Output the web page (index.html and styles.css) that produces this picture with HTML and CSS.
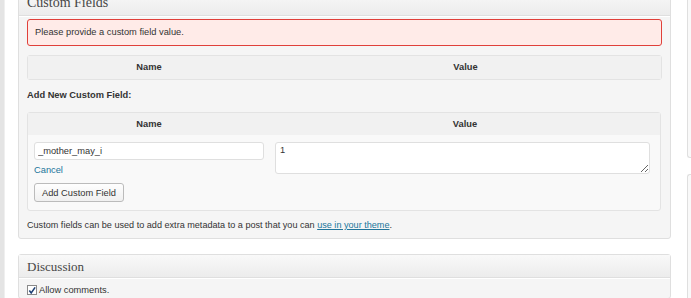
FILE: index.html
```html
<!DOCTYPE html>
<html lang="en">
<head>
  <meta charset="UTF-8" />
  <title>Custom Fields</title>
  <link rel="stylesheet" href="styles.css">
</head>
<body>
  <div class="edge"></div>

  <div class="content">
    <!-- Custom Fields meta box -->
    <div class="postbox first">
      <h3 class="box-title">Custom Fields</h3>
      <div class="inside">
        <div class="notice-error">Please provide a custom field value.</div>

        <div class="meta-table head-only">
          <div class="meta-head">
            <span class="col-name">Name</span>
            <span class="col-value">Value</span>
          </div>
        </div>

        <p class="add-label">Add New Custom Field:</p>

        <div class="meta-table">
          <div class="meta-head">
            <span class="col-name">Name</span>
            <span class="col-value">Value</span>
          </div>
          <div class="meta-body">
            <div class="col-name left">
              <input type="text" class="key-input" value="_mother_may_i">
              <a href="#" class="cancel">Cancel</a>
              <button class="button">Add Custom Field</button>
            </div>
            <div class="col-value">
              <textarea class="value-input">1</textarea>
            </div>
          </div>
        </div>

        <p class="desc">Custom fields can be used to add extra metadata to a post that you can <a href="#">use in your theme</a>.</p>
      </div>
    </div>

    <!-- Discussion meta box -->
    <div class="postbox">
      <h3 class="box-title small">Discussion</h3>
      <div class="inside">
        <label class="check">
          <span class="checkbox">
            <svg width="9" height="9" viewBox="0 0 9 9"><path d="M1.5 4.5 L3.6 7.2 L8 1" fill="none" stroke="#1d3f73" stroke-width="1.8"/></svg>
          </span>
          Allow comments.
        </label>
      </div>
    </div>
  </div>

  <div class="side">
    <div class="side-box tall"></div>
    <div class="side-box"></div>
  </div>
</body>
</html>
```

FILE: styles.css
```css
body {
  margin: 0;
  display: flex;
  height: 298px;
  overflow: hidden;
  background: #fff;
  font-family: "Liberation Sans", Arial, sans-serif;
  font-size: 9.3px;
  color: #333;
}

/* левая серая полоска */
.edge {
  width: 4px;
  flex-shrink: 0;
  background: #e4e4e4;
  border-right: 1px solid #efefef;
}

.content {
  flex: 1;
  margin: 0 16px 0 13px;
  min-width: 0;
}

/* Мета-бокс */
.postbox {
  border: 1px solid #dfdfdf;
  border-radius: 3px;
  background: #f5f5f5;
  margin-bottom: 15px;
}
.postbox.first {
  margin-top: -10px;
}

.box-title {
  margin: 0;
  height: 24px;
  line-height: 23px;
  padding: 0 8px;
  border-bottom: 1px solid #dfdfdf;
  background: linear-gradient(#f9f9f9, #ececec);
  font-family: "Liberation Serif", Georgia, serif;
  font-weight: normal;
  font-size: 14px;
  color: #464646;
  box-shadow: 0 1px 0 #fff;
}
.box-title.small {
  height: 22px;
  line-height: 23px;
  font-size: 13px;
}

.inside {
  padding: 3px 8px 0;
}

.notice-error {
  border: 1px solid #e0403a;
  border-radius: 3px;
  background: #ffebe8;
  height: 25px;
  line-height: 25px;
  padding: 0 7px;
  margin-bottom: 9px;
}

/* Таблицы полей */
.meta-table {
  border: 1px solid #e3e3e3;
  border-radius: 3px;
  background: #f9f9f9;
  margin-right: 1px;
}
.meta-table.head-only {
  margin-right: 0;
}
.meta-head {
  display: flex;
  height: 22px;
  line-height: 22px;
  background: #f1f1f1;
  font-weight: bold;
  text-align: center;
}
.head-only .meta-head {
  height: 23px;
  line-height: 23px;
}
.col-name {
  width: 242px;
  flex-shrink: 0;
}
.col-value {
  flex: 1;
}

.meta-body {
  display: flex;
  padding: 7px 0 8px;
}
.meta-body .left {
  display: flex;
  flex-direction: column;
  align-items: flex-start;
  padding-left: 6px;
  width: 241px;
}
.meta-body .col-value {
  padding: 0 10px 0 0;
}

.key-input {
  box-sizing: border-box;
  width: 230px;
  height: 18px;
  margin: 0;
  padding: 0 3px;
  border: 1px solid #dfdfdf;
  border-radius: 3px;
  background: #fff;
  font: inherit;
  color: #333;
  outline: none;
}
.value-input {
  box-sizing: border-box;
  display: block;
  width: 100%;
  height: 32px;
  margin: 0;
  padding: 2px 4px;
  border: 1px solid #dfdfdf;
  border-radius: 3px;
  background: #fff;
  font: inherit;
  color: #333;
  outline: none;
}

.cancel {
  color: #21759b;
  text-decoration: none;
  margin: 4px 0 0;
  line-height: 12px;
}

.button {
  margin-top: 7px;
  height: 19px;
  padding: 0 7px;
  border: 1px solid #bbb;
  border-radius: 3px;
  background: linear-gradient(#fefefe, #f0f0f0);
  font: inherit;
  color: #333;
}

.add-label {
  margin: 0;
  height: 32px;
  line-height: 31px;
  font-weight: bold;
}

.desc {
  margin: 0;
  height: 27px;
  line-height: 28px;
  font-size: 9.1px;
}
.desc a {
  color: #21759b;
}

/* Discussion */
.check {
  display: flex;
  align-items: center;
  gap: 2px;
  height: 16px;
  padding-top: 1px;
}
.checkbox {
  width: 8px;
  height: 8px;
  border: 1px solid #8a8a8a;
  background: #fff;
  display: flex;
  align-items: center;
  justify-content: center;
}

/* Правая колонка */
.side {
  width: 4px;
  flex-shrink: 0;
}
.side-box {
  border: 1px solid #dfdfdf;
  border-right: 0;
  border-radius: 3px 0 0 3px;
  background: #f9f9f9;
  height: 140px;
}
.side-box.tall {
  margin-top: -10px;
  height: 166px;
  margin-bottom: 16px;
}
```
